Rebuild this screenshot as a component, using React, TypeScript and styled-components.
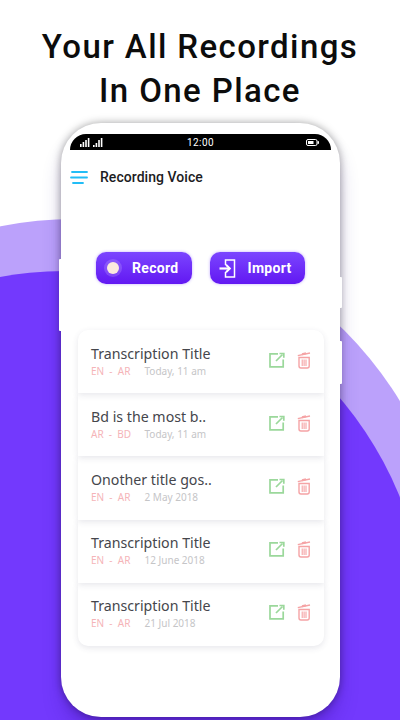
import React from 'react';
import styled, { createGlobalStyle } from 'styled-components';

const GlobalStyle = createGlobalStyle`
    html, body {
        margin: 0;
        background: #ffffff;
    }
`;

const Page = styled.div`
    position: relative;
    width: 400px;
    height: 720px;
    overflow: hidden;
    background: #ffffff;
    font-family: 'Roboto', 'Liberation Sans', sans-serif;
`;

const Circle = styled.div<{ $cx: number; $cy: number; $r: number; $color: string }>`
    position: absolute;
    left: ${({ $cx, $r }) => $cx - $r}px;
    top: ${({ $cy, $r }) => $cy - $r}px;
    width: ${({ $r }) => $r * 2}px;
    height: ${({ $r }) => $r * 2}px;
    border-radius: 50%;
    background: ${({ $color }) => $color};
`;

const Headline = styled.h1`
    position: relative;
    margin: 0;
    padding-top: 25px;
    font-size: 33px;
    line-height: 44px;
    font-weight: 500;
    letter-spacing: 1.4px;
    text-align: center;
    color: #0c0c0c;
`;

const Phone = styled.div`
    position: relative;
    box-sizing: border-box;
    width: 279px;
    height: 594px;
    margin: 10px 0 0 61px;
    padding: 11px 9px 0;
    background: #ffffff;
    border-radius: 40px;
    box-shadow: 0 0 8px rgba(0, 0, 0, 0.36), 0 16px 22px -4px rgba(40, 0, 130, 0.3);
`;

const SideKey = styled.div<{ $side: 'left' | 'right'; $top: number; $height: number }>`
    position: absolute;
    ${({ $side }) => $side}: -2px;
    top: ${({ $top }) => $top}px;
    width: 3px;
    height: ${({ $height }) => $height}px;
    background: #ffffff;
    border-radius: 1px;
`;

const StatusBar = styled.div`
    display: grid;
    grid-template-columns: 1fr auto 1fr;
    align-items: center;
    height: 16px;
    padding: 0 10px;
    background: #000000;
    border-radius: 17px 17px 0 0;
    color: #ffffff;
    font-size: 10px;
    letter-spacing: 0.4px;
`;

const StatusSide = styled.div<{ $end?: boolean }>`
    display: flex;
    justify-content: ${({ $end }) => ($end ? 'flex-end' : 'flex-start')};
    margin-right: ${({ $end }) => ($end ? 2 : 0)}px;
`;

const Header = styled.div`
    display: flex;
    align-items: center;
    gap: 12px;
    margin: 19px 0 0;
    height: 16px;
`;

const HeaderTitle = styled.span`
    font-size: 14px;
    font-weight: 500;
    letter-spacing: 0.05px;
    color: #1c1c22;
`;

const Actions = styled.div`
    display: flex;
    gap: 18px;
    margin: 67px 0 0 26px;
`;

const ActionButton = styled.div<{ $pad: number; $gap: number }>`
    display: flex;
    align-items: center;
    gap: ${({ $gap }) => $gap}px;
    box-sizing: border-box;
    width: 95.5px;
    height: 32px;
    padding-left: ${({ $pad }) => $pad}px;
    border-radius: 10px;
    background: linear-gradient(180deg, #7b45ff 0%, #6218f2 100%);
    box-shadow: 0 0 3px rgba(110, 60, 255, 0.45);
    color: #ffffff;
    font-size: 14px;
    font-weight: 700;
    letter-spacing: 0.3px;
`;

const RecordDot = styled.span`
    width: 12px;
    height: 12px;
    border-radius: 50%;
    background: #fbeade;
    box-shadow: 0 0 0 3px rgba(255, 255, 255, 0.16);
`;

const List = styled.div`
    width: 246px;
    margin: 46px 0 0 8px;
`;

const Row = styled.div<{ $first?: boolean; $last?: boolean; $layer: number }>`
    position: relative;
    z-index: ${({ $layer }) => $layer};
    display: flex;
    align-items: center;
    justify-content: space-between;
    box-sizing: border-box;
    height: 63.2px;
    padding: 0 13px;
    background: #ffffff;
    border-radius: ${({ $first, $last }) =>
        `${$first ? 10 : 0}px ${$first ? 10 : 0}px ${$last ? 10 : 0}px ${$last ? 10 : 0}px`};
    box-shadow: 0 2px 6px rgba(60, 60, 90, 0.12);
`;

const RowText = styled.div`
    display: flex;
    flex-direction: column;
    margin-top: -1px;
    font-family: 'Noto Sans', 'Open Sans', sans-serif;
`;

const RowTitle = styled.span`
    font-size: 14.2px;
    line-height: 18px;
    color: #45464c;
`;

const RowMeta = styled.div`
    display: flex;
    margin-top: 1px;
    font-size: 10px;
    line-height: 14px;
`;

const Lang = styled.span`
    width: 53.5px;
    color: #f5b4b8;
    white-space: pre;
`;

const DateText = styled.span`
    color: #c5c5c7;
`;

const RowIcons = styled.div`
    display: flex;
    align-items: center;
    gap: 12px;
    margin-top: -4px;
`;

const SignalIcon = () => (
    <svg width="29" height="9" viewBox="0 0 29 9" fill="#fff">
        <rect x="0" y="6" width="1.6" height="3" />
        <rect x="2.6" y="4" width="1.6" height="5" />
        <rect x="5.2" y="2" width="1.6" height="7" />
        <rect x="7.8" y="0" width="1.6" height="9" />
        <rect x="13" y="7" width="1.6" height="2" />
        <rect x="15.6" y="5" width="1.6" height="4" />
        <rect x="18.2" y="2" width="1.6" height="7" />
        <rect x="20.8" y="0" width="1.6" height="9" />
    </svg>
);

const BatteryIcon = () => (
    <svg width="13" height="7" viewBox="0 0 13 7">
        <rect x="0.5" y="0.5" width="10.5" height="6" rx="1.5" fill="none" stroke="#fff" />
        <rect x="2" y="2" width="5.5" height="3" fill="#fff" />
        <rect x="11.5" y="2.2" width="1.5" height="2.6" fill="#fff" />
    </svg>
);

const MenuIcon = () => (
    <svg width="18" height="13" viewBox="0 0 18 13" fill="none" stroke="#22bdf6" strokeWidth="1.8" strokeLinecap="round">
        <path d="M2 1h15" />
        <path d="M1 6.5h16" />
        <path d="M3 12h10" />
    </svg>
);

const ImportIcon = () => (
    <svg width="17" height="19" viewBox="0 0 17 19" fill="none" stroke="#fff" strokeWidth="1.5">
        <path d="M6.5 6V1h9v17h-9v-5" />
        <path d="M0.5 9.5h9.5" strokeWidth="2.2" />
        <path d="M7 5.8l3.8 3.7L7 13.2" strokeWidth="2" />
    </svg>
);

const EditIcon = () => (
    <svg width="16" height="16" viewBox="0 0 16 16" fill="none" stroke="#9bd89b" strokeWidth="1.7">
        <path d="M9 1.8H1v13h13.2V7.5" />
        <path d="M7 9l6.5-6.5" />
        <path d="M10.5 1.5h4.3v4.3" />
    </svg>
);

const TrashIcon = () => (
    <svg width="14" height="18" viewBox="0 0 14 18" fill="none" stroke="#f5a3a5" strokeWidth="1.4">
        <path d="M0.8 4.6L13 2" />
        <path d="M5 3.2L9 2.3" strokeWidth="2" />
        <path d="M2 6.5h10.2V15a2 2 0 0 1-2 2H4a2 2 0 0 1-2-2z" />
        <path d="M5.2 8.5v6.5M7.1 8.5v6.5M9 8.5v6.5" strokeWidth="1.1" />
    </svg>
);

const recordings = [
    { title: 'Transcription Title', lang: 'EN  -  AR', date: 'Today, 11 am' },
    { title: 'Bd is the most b..', lang: 'AR  -  BD', date: 'Today, 11 am' },
    { title: 'Onother title gos..', lang: 'EN  -  AR', date: '2 May  2018' },
    { title: 'Transcription Title', lang: 'EN  -  AR', date: '12 June 2018' },
    { title: 'Transcription Title', lang: 'EN  -  AR', date: '21 Jul 2018' },
];

const App: React.FC = () => {
    return (
        <Page>
            <GlobalStyle />
            <Circle $cx={75} $cy={600} $r={381} $color="#bba1fb" />
            <Circle $cx={65} $cy={632} $r={361} $color="#7339fd" />
            <Headline>
                Your All Recordings
                <br />
                In One Place
            </Headline>
            <Phone>
                <SideKey $side="left" $top={136} $height={72} />
                <SideKey $side="right" $top={154} $height={31} />
                <SideKey $side="right" $top={218} $height={43} />
                <StatusBar>
                    <StatusSide>
                        <SignalIcon />
                    </StatusSide>
                    <span>12:00</span>
                    <StatusSide $end>
                        <BatteryIcon />
                    </StatusSide>
                </StatusBar>
                <Header>
                    <MenuIcon />
                    <HeaderTitle>Recording Voice</HeaderTitle>
                </Header>
                <Actions>
                    <ActionButton $pad={11} $gap={13}>
                        <RecordDot />
                        Record
                    </ActionButton>
                    <ActionButton $pad={9} $gap={12}>
                        <ImportIcon />
                        Import
                    </ActionButton>
                </Actions>
                <List>
                    {recordings.map((item, index) => (
                        <Row
                            key={index}
                            $layer={recordings.length - index}
                            $first={index === 0}
                            $last={index === recordings.length - 1}
                        >
                            <RowText>
                                <RowTitle>{item.title}</RowTitle>
                                <RowMeta>
                                    <Lang>{item.lang}</Lang>
                                    <DateText>{item.date}</DateText>
                                </RowMeta>
                            </RowText>
                            <RowIcons>
                                <EditIcon />
                                <TrashIcon />
                            </RowIcons>
                        </Row>
                    ))}
                </List>
            </Phone>
        </Page>
    );
};

export default App;
